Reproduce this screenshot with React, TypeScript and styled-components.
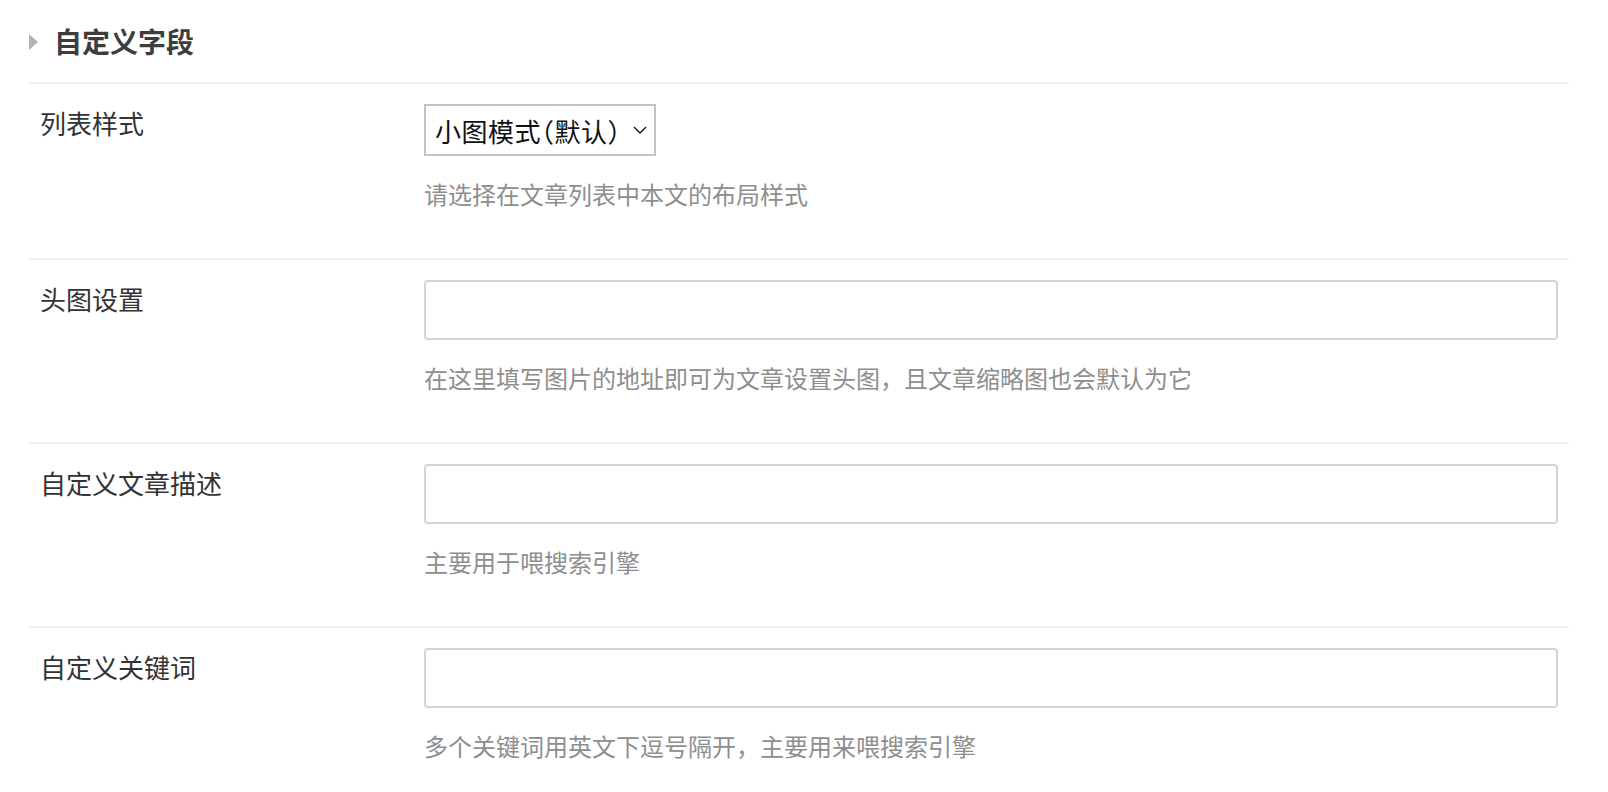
import React from "react";
import styled, { createGlobalStyle } from "styled-components";

const GlobalStyle = createGlobalStyle`
  html, body {
    margin: 0;
    padding: 0;
    background: #ffffff;
  }
  body {
    font-family: "Noto Sans CJK SC", "Noto Sans", sans-serif;
    color: #333333;
  }
`;

const Panel = styled.section`
  width: 1540px;
  margin-left: 29px;
`;

const Header = styled.div`
  display: flex;
  align-items: center;
  gap: 16px;
  height: 82px;
  border-bottom: 2px solid #f0f0f0;
`;

const Caret = styled.span`
  width: 0;
  height: 0;
  border-top: 8px solid transparent;
  border-bottom: 8px solid transparent;
  border-left: 9px solid #b3b3b3;
  margin-top: 1px;
`;

const Title = styled.h2`
  margin: 0;
  font-size: 28px;
  line-height: 36px;
  font-weight: 700;
  color: #3d3d3d;
`;

const Row = styled.div`
  display: grid;
  grid-template-columns: 384px 1fr;
  padding: 20px 11px 46px;
  border-bottom: 2px solid #f0f0f0;

  &:last-child {
    border-bottom: none;
  }
`;

const Label = styled.label`
  font-size: 26px;
  line-height: 36px;
  padding-top: 1px;
  color: #333333;
`;

const Field = styled.div`
  display: flex;
  flex-direction: column;
  align-items: flex-start;
`;

const TextInput = styled.input`
  box-sizing: border-box;
  width: 100%;
  height: 60px;
  border: 2px solid #d4d4d4;
  border-radius: 4px;
  background: #ffffff;
  padding: 0 12px;
  font-family: inherit;
  font-size: 24px;
  outline: none;
`;

const SelectWrap = styled.div`
  position: relative;
  width: 232px;
  height: 52px;
`;

const Select = styled.select`
  box-sizing: border-box;
  appearance: none;
  width: 100%;
  height: 100%;
  border: 2px solid #c2c2c2;
  border-radius: 0;
  background: #ffffff;
  padding: 0 0 0 9px;
  font-family: inherit;
  font-size: 26px;
  font-feature-settings: "halt";
  letter-spacing: 0.5px;
  color: #111111;
  outline: none;
`;

const Chevron = styled.svg`
  position: absolute;
  right: 9px;
  top: 22px;
  width: 14px;
  height: 8px;
  pointer-events: none;
`;

const Hint = styled.p`
  margin: 20px 0 0;
  font-size: 24px;
  line-height: 36px;
  color: #8e8e8e;
`;

const fields = [
  { label: "头图设置", hint: "在这里填写图片的地址即可为文章设置头图，且文章缩略图也会默认为它" },
  { label: "自定义文章描述", hint: "主要用于喂搜索引擎" },
  { label: "自定义关键词", hint: "多个关键词用英文下逗号隔开，主要用来喂搜索引擎" },
];

export default function App() {
  return (
    <>
      <GlobalStyle />
      <Panel>
        <Header>
          <Caret />
          <Title>自定义字段</Title>
        </Header>
        <Row>
          <Label>列表样式</Label>
          <Field>
            <SelectWrap>
              <Select defaultValue="small">
                <option value="small">小图模式（默认）</option>
                <option value="big">大图模式</option>
                <option value="none">无图模式</option>
              </Select>
              <Chevron viewBox="0 0 14 8">
                <path d="M1 1l6 6 6-6" fill="none" stroke="#222" strokeWidth="1.5" />
              </Chevron>
            </SelectWrap>
            <Hint>请选择在文章列表中本文的布局样式</Hint>
          </Field>
        </Row>
        {fields.map((f) => (
          <Row key={f.label}>
            <Label>{f.label}</Label>
            <Field>
              <TextInput type="text" />
              <Hint>{f.hint}</Hint>
            </Field>
          </Row>
        ))}
      </Panel>
    </>
  );
}
